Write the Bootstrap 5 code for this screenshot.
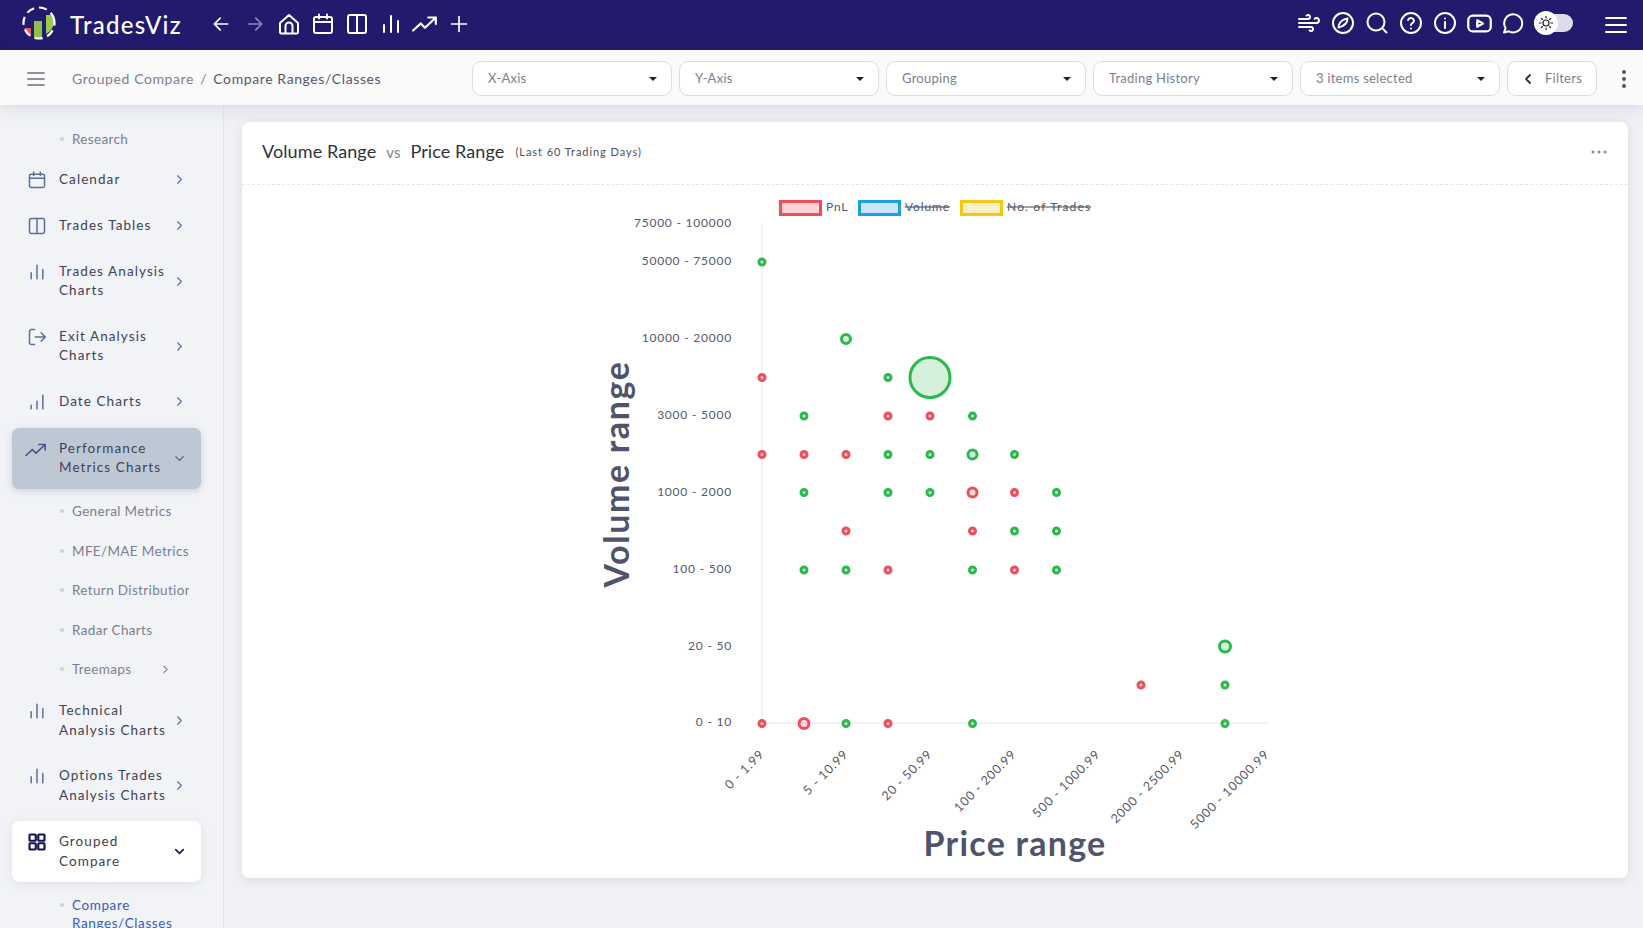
<!DOCTYPE html>
<html lang="en">
<head>
<meta charset="utf-8">
<title>TradesViz</title>
<link rel="stylesheet" href="https://cdn.jsdelivr.net/npm/bootstrap@5.3.0/dist/css/bootstrap.min.css">
<style>
html,body{height:100%}
body{font-family:"Lato","Noto Sans",sans-serif;background:#f0f1f5;color:#3f4254;overflow:hidden}
.ico{fill:none;stroke:currentColor;stroke-width:1.8;stroke-linecap:round;stroke-linejoin:round;flex:none;display:block}
.top-strip{height:50px;background:#211a6d;color:#fff;flex:none}
.brand-word{font-size:24px;font-weight:500;letter-spacing:1.25px;color:#fff;margin-left:14px;width:133.500px}
.nav-ic{color:#fff;stroke-width:2}
.nav-ic.dim{color:#8d8ab8}
.nav-slot{width:34px;display:flex;justify-content:center;align-items:center}
.theme-switch{width:39px;height:18px;border-radius:9px;background:rgba(255,255,255,.85);position:relative;margin-left:4px;margin-right:32px;margin-bottom:4px}
.theme-knob{position:absolute;left:0;top:-3px;width:24px;height:24px;border-radius:50%;background:#fff;color:#222;display:flex;align-items:center;justify-content:center}
.sub-strip{height:55px;padding-top:2px;background:#fafafb;flex:none;box-shadow:0 3px 16px rgba(60,65,90,.14);position:relative;z-index:2}
.crumb{font-size:14px;letter-spacing:.6px;color:#7c7f8e}
.crumb b{font-weight:400;color:#555868}
.crumb i{font-style:normal;margin:0 2px}
.pick{width:200px;height:35px;border:1px solid #dcdde2;border-radius:9px;background:#fff;color:#7c7f8e;font-size:13px;padding:0 14px 0 15px;display:flex;align-items:center;justify-content:space-between;letter-spacing:.25px}
.pick.dropdown-toggle::after{color:#222;margin:0;border-top-width:.36em;border-left-width:.33em;border-right-width:.33em}
.pick:hover,.pick:focus{background:#fff;color:#7c7f8e;border-color:#dcdde2}
.pick-short{width:90px;justify-content:center;gap:12px}
.side-col{width:224px;flex:none;border-right:1px solid #e5e7ec;background:#f1f3f6;padding-top:14px;overflow:hidden}
.side-item{width:189px;margin:0 0 4px 12px;padding:11px 14px 11px 15px;display:flex;color:#3f4254;font-size:13.5px;line-height:19.5px;letter-spacing:1.08px;text-decoration:none;border-radius:7px}
.side-item.one{height:42px}
.side-label{flex:1;margin-left:12px;white-space:nowrap}
.side-icon{color:#5b6f9e}
.side-chev{color:#5b6f9e;align-self:center}
.side-item.open-grey{background:#bec8d4;box-shadow:0 2px 6px rgba(90,100,130,.25);margin-top:5px;margin-bottom:3px}
.side-item.open-white{background:#fff;box-shadow:0 2px 8px rgba(90,100,130,.12);margin-top:5px}
.side-item.open-white .side-icon,.side-item.open-white .side-chev{color:#171352}
.side-item.tech-gap{margin-top:1px}
.side-sub{height:39.5px;margin-left:60px;width:129px;display:flex;align-items:center;font-size:13.5px;letter-spacing:.35px;color:#7c7f8e;white-space:nowrap;overflow:hidden;text-decoration:none;position:relative;padding-left:12px}
.side-sub::before{content:"";position:absolute;left:0;top:50%;width:4px;height:4px;margin-top:-2px;border-radius:50%;background:#cfd3da}
.side-sub.here{height:auto;margin-top:14px;align-items:flex-start;line-height:18px;color:#3d5bc0;letter-spacing:.6px}
.side-sub.here::before{top:9px}
.main-col{padding:17px 15px 0 18px;min-width:0}
.chart-card{height:756px;background:#fff;border-radius:7px;box-shadow:0 2px 10px rgba(60,65,90,.12)}
.chart-head{height:63px;border-bottom:1px dashed #e4e6ea;padding:0 20px 2px;color:#2f3140}
.chart-head h1{font-size:18px;font-weight:400;margin:0;letter-spacing:.1px}
.vs{color:#80838f;font-size:15px;margin:0 10px}
.days{font-size:11px;letter-spacing:.95px;color:#4c4f5d;margin-left:11px}
.chart-svg{display:block;width:1386px;height:693px}
.tick{font-size:12px;fill:#55586a;letter-spacing:.78px}
.tick-x{font-size:12.5px;letter-spacing:.8px}
.axis-name{font-size:34px;font-weight:700;fill:#50536a;letter-spacing:1.25px}
.axis-name.tall{letter-spacing:1.6px}
.legend-word{font-size:12px;fill:#55586a;letter-spacing:.85px}
.struck{text-decoration:line-through}
.dot-g{fill:rgba(45,184,77,.2);stroke:#2db84d;stroke-width:3}
.dot-r{fill:rgba(238,77,90,.2);stroke:#ee4d5a;stroke-width:3}
</style>
</head>
<body class="d-flex flex-column">

<svg width="0" height="0" class="position-absolute">
<symbol id="i-cal" viewBox="0 0 24 24"><rect x="3" y="5" width="18" height="16" rx="2"/><path d="M3 10h18M8 2.500v4M16 2.500v4"/></symbol>
<symbol id="i-col" viewBox="0 0 24 24"><rect x="3" y="3" width="18" height="18" rx="2"/><path d="M12 3v18"/></symbol>
<symbol id="i-bars" viewBox="0 0 24 24"><path d="M5 20v-7M12 20V4M19 20V9"/></symbol>
<symbol id="i-step" viewBox="0 0 24 24"><path d="M5 20v-4M12 20v-9M19 20V4"/></symbol>
<symbol id="i-trend" viewBox="0 0 24 24"><path d="M1 18l7-6.500 4 4L22 6M15 6h7v6"/></symbol>
<symbol id="i-right" viewBox="0 0 24 24"><path d="M9 6l6 6-6 6"/></symbol>
<symbol id="i-down" viewBox="0 0 24 24"><path d="M6 9l6 6 6-6"/></symbol>
</svg>

<header class="top-strip d-flex align-items-center">
  <svg width="34" height="34" viewBox="0 0 34 34" style="margin-left:22px;margin-bottom:4px;flex:none" aria-label="TradesViz logo">
    <path d="M2 22h7v9z" fill="#e0566a"/>
    <rect x="12" y="15" width="8" height="17" fill="#8fc04a"/>
    <path d="M24 9h7a15 15 0 0 1 1 8 15 15 0 0 1-8 11z" fill="#9cc84e"/>
    <circle cx="17" cy="17" r="15.500" fill="none" stroke="#fff" stroke-width="2.200" stroke-dasharray="8 5" transform="rotate(-20 17 17)"/>
  </svg>
  <span class="brand-word">TradesViz</span>
  <div class="d-flex align-items-center" style="padding-bottom:2px">
    <span class="nav-slot"><svg class="ico nav-ic" width="20" height="20" viewBox="0 0 24 24"><path d="M20 12H4M11 5l-7 7 7 7"/></svg></span>
    <span class="nav-slot"><svg class="ico nav-ic dim" width="20" height="20" viewBox="0 0 24 24"><path d="M4 12h16M13 5l7 7-7 7"/></svg></span>
    <span class="nav-slot"><svg class="ico nav-ic" width="24" height="24" viewBox="0 0 24 24"><path d="M3 11l9-8 9 8v9a1.500 1.500 0 0 1-1.500 1.500h-15A1.500 1.500 0 0 1 3 20zM8.500 21.500V14a3.500 3.500 0 0 1 7 0v7.500"/></svg></span>
    <span class="nav-slot"><svg class="ico nav-ic" width="24" height="24"><use href="#i-cal"/></svg></span>
    <span class="nav-slot"><svg class="ico nav-ic" width="24" height="24"><use href="#i-col"/></svg></span>
    <span class="nav-slot"><svg class="ico nav-ic" width="24" height="24"><use href="#i-bars"/></svg></span>
    <span class="nav-slot"><svg class="ico nav-ic" width="26" height="26"><use href="#i-trend"/></svg></span>
    <span class="nav-slot"><svg class="ico nav-ic" width="20" height="20" viewBox="0 0 24 24"><path d="M12 3v18M3 12h18"/></svg></span>
  </div>
  <div class="d-flex align-items-center ms-auto">
    <span class="nav-slot" style="margin-bottom:4px"><svg class="ico nav-ic" width="24" height="24" viewBox="0 0 24 24"><path d="M9.590 4.590A2 2 0 1 1 11 8H2m10.590 11.410A2 2 0 1 0 14 16H2m15.730-8.270A2.500 2.500 0 1 1 19.500 12H2"/></svg></span>
    <span class="nav-slot" style="margin-bottom:4px"><svg class="ico nav-ic" width="24" height="24" viewBox="0 0 24 24"><circle cx="12" cy="12" r="10"/><path d="M16.500 7.500c0 4-3 7.500-9 9 0-4.500 3.500-8 9-9z"/></svg></span>
    <span class="nav-slot" style="margin-bottom:4px"><svg class="ico nav-ic" width="24" height="24" viewBox="0 0 24 24"><circle cx="11" cy="11" r="8.500"/><path d="M21.500 21.500l-4.500-4.500"/></svg></span>
    <span class="nav-slot" style="margin-bottom:4px"><svg class="ico nav-ic" width="24" height="24" viewBox="0 0 24 24"><circle cx="12" cy="12" r="10"/><path d="M9.100 9a3 3 0 0 1 5.800 1c0 2-3 2.500-3 4M12 17.500v.01"/></svg></span>
    <span class="nav-slot" style="margin-bottom:4px"><svg class="ico nav-ic" width="24" height="24" viewBox="0 0 24 24"><circle cx="12" cy="12" r="10"/><path d="M12 11v6M12 7.500v.01"/></svg></span>
    <span class="nav-slot" style="margin-bottom:4px"><svg class="ico nav-ic" width="27" height="27" viewBox="0 0 24 24"><rect x="2" y="5" width="20" height="14" rx="4"/><path d="M10 9.200l5 2.800-5 2.800z"/></svg></span>
    <span class="nav-slot" style="margin-bottom:4px"><svg class="ico nav-ic" width="24" height="24" viewBox="0 0 24 24"><path d="M3 21.500l1.600-4.300a9 9 0 1 1 3.300 3.100z"/></svg></span>
    <div class="theme-switch"><span class="theme-knob"><svg class="ico" width="16" height="16" viewBox="0 0 24 24"><circle cx="12" cy="12" r="4.500"/><path d="M12 2v2.500M12 19.500V22M2 12h2.500M19.500 12H22M5 5l1.700 1.700M17.300 17.300L19 19M5 19l1.700-1.700M17.300 6.700L19 5"/></svg></span></div>
    <svg class="ico nav-ic" width="22" height="22" viewBox="0 0 22 22" style="margin-right:16px"><path d="M1 4h20M1 11h20M1 18h20"/></svg>
  </div>
</header>

<div class="sub-strip d-flex align-items-center">
  <svg class="ico" width="18" height="16" viewBox="0 0 18 16" style="margin-left:27px;color:#8d8f9c"><path d="M1 2h16M1 8h16M1 14h16"/></svg>
  <nav class="crumb" style="margin-left:27px">Grouped Compare <i>/</i> <b>Compare Ranges/Classes</b></nav>
  <div class="d-flex align-items-center ms-auto" style="gap:7px;margin-right:12px">
    <button class="btn pick dropdown-toggle" type="button">X-Axis</button>
    <button class="btn pick dropdown-toggle" type="button">Y-Axis</button>
    <button class="btn pick dropdown-toggle" type="button">Grouping</button>
    <button class="btn pick dropdown-toggle" type="button">Trading History</button>
    <button class="btn pick dropdown-toggle" type="button">3 items selected</button>
    <button class="btn pick pick-short" type="button"><svg class="ico" width="10" height="12" viewBox="0 0 10 12" style="color:#333"><path d="M7 2L3 6l4 4"/></svg>Filters</button>
    <svg width="6" height="20" viewBox="0 0 6 20" style="margin-left:17px;margin-right:4px;fill:#555"><circle cx="3" cy="3" r="2"/><circle cx="3" cy="10" r="2"/><circle cx="3" cy="17" r="2"/></svg>
  </div>
</div>

<div class="d-flex flex-grow-1" style="min-height:0">
  <aside class="side-col">
    <a class="side-sub" href="#">Research</a>
    <a class="side-item one" href="#"><svg class="ico side-icon" width="20" height="20"><use href="#i-cal"/></svg><span class="side-label">Calendar</span><svg class="ico side-chev" width="15" height="15"><use href="#i-right"/></svg></a>
    <a class="side-item one" href="#"><svg class="ico side-icon" width="20" height="20"><use href="#i-col"/></svg><span class="side-label">Trades Tables</span><svg class="ico side-chev" width="15" height="15"><use href="#i-right"/></svg></a>
    <a class="side-item" href="#"><svg class="ico side-icon" width="20" height="20"><use href="#i-bars"/></svg><span class="side-label">Trades Analysis<br>Charts</span><svg class="ico side-chev" width="15" height="15"><use href="#i-right"/></svg></a>
    <a class="side-item" href="#"><svg class="ico side-icon" width="20" height="20" viewBox="0 0 24 24"><path d="M9 21H5a2 2 0 0 1-2-2V5a2 2 0 0 1 2-2h4M10 12h12M17 7l5 5-5 5"/></svg><span class="side-label">Exit Analysis<br>Charts</span><svg class="ico side-chev" width="15" height="15"><use href="#i-right"/></svg></a>
    <a class="side-item one" href="#"><svg class="ico side-icon" width="20" height="20"><use href="#i-step"/></svg><span class="side-label">Date Charts</span><svg class="ico side-chev" width="15" height="15"><use href="#i-right"/></svg></a>
    <a class="side-item open-grey" href="#"><svg class="ico side-icon" width="22" height="22" style="margin-left:-2px;color:#47598c"><use href="#i-trend"/></svg><span class="side-label">Performance<br>Metrics Charts</span><svg class="ico side-chev" width="15" height="15" style="color:#47598c"><use href="#i-down"/></svg></a>
    <a class="side-sub" href="#">General Metrics</a>
    <a class="side-sub" href="#">MFE/MAE Metrics</a>
    <a class="side-sub" href="#">Return Distribution</a>
    <a class="side-sub" href="#">Radar Charts</a>
    <a class="side-sub" href="#">Treemaps<svg class="ico" width="13" height="13" style="margin-left:28px;color:#3f4254"><use href="#i-right"/></svg></a>
    <a class="side-item tech-gap" href="#"><svg class="ico side-icon" width="20" height="20"><use href="#i-bars"/></svg><span class="side-label">Technical<br>Analysis Charts</span><svg class="ico side-chev" width="15" height="15"><use href="#i-right"/></svg></a>
    <a class="side-item" href="#"><svg class="ico side-icon" width="20" height="20"><use href="#i-bars"/></svg><span class="side-label">Options Trades<br>Analysis Charts</span><svg class="ico side-chev" width="15" height="15"><use href="#i-right"/></svg></a>
    <a class="side-item open-white" href="#"><svg class="ico side-icon" width="20" height="20" viewBox="0 0 24 24" style="stroke-width:2.600"><rect x="3" y="3" width="7.500" height="7.500" rx="1"/><rect x="13.500" y="3" width="7.500" height="7.500" rx="1"/><rect x="3" y="13.500" width="7.500" height="7.500" rx="1"/><rect x="13.500" y="13.500" width="7.500" height="7.500" rx="1"/></svg><span class="side-label">Grouped<br>Compare</span><svg class="ico side-chev" width="15" height="15" style="stroke-width:2.600"><use href="#i-down"/></svg></a>
    <a class="side-sub here" href="#">Compare<br>Ranges/Classes</a>
  </aside>

  <main class="main-col flex-grow-1">
    <section class="chart-card">
      <div class="chart-head d-flex align-items-center">
        <h1>Volume Range</h1><span class="vs">vs</span><h1>Price Range</h1><span class="days">(Last 60 Trading Days)</span>
        <svg class="ms-auto" width="16" height="4" viewBox="0 0 16 4" style="fill:#8a8d99;margin-right:1px"><circle cx="2" cy="2" r="1.500"/><circle cx="8" cy="2" r="1.500"/><circle cx="14" cy="2" r="1.500"/></svg>
      </div>
      <svg class="chart-svg" viewBox="242 185 1386 693" role="img" aria-label="Bubble chart of volume range against price range">
        <rect x="780.500" y="201.500" width="40" height="13" fill="#fdd5d8" stroke="#ee4d5a" stroke-width="3"/>
        <text class="legend-word" x="826" y="211">PnL</text>
        <rect x="859.500" y="201.500" width="40" height="13" fill="#c9e6fa" stroke="#1c9fe0" stroke-width="3"/>
        <text class="legend-word struck" x="905" y="211">Volume</text>
        <rect x="961.500" y="201.500" width="40" height="13" fill="#fdf0c4" stroke="#f5c518" stroke-width="3"/>
        <text class="legend-word struck" x="1007" y="211" textLength="84">No. of Trades</text>
        <path d="M762 223V723H1268" fill="none" stroke="#e4e4e6" stroke-width="1"/>
        <g text-anchor="end">
          <text class="tick" x="732" y="227">75000 - 100000</text>
          <text class="tick" x="732" y="265">50000 - 75000</text>
          <text class="tick" x="732" y="342">10000 - 20000</text>
          <text class="tick" x="732" y="419">3000 - 5000</text>
          <text class="tick" x="732" y="496">1000 - 2000</text>
          <text class="tick" x="732" y="573">100 - 500</text>
          <text class="tick" x="732" y="650">20 - 50</text>
          <text class="tick" x="732" y="726">0 - 10</text>
        </g>
        <g text-anchor="end">
          <text class="tick tick-x" transform="translate(765 755) rotate(-45)">0 - 1.99</text>
          <text class="tick tick-x" transform="translate(849 755) rotate(-45)">5 - 10.99</text>
          <text class="tick tick-x" transform="translate(933 755) rotate(-45)">20 - 50.99</text>
          <text class="tick tick-x" transform="translate(1017 755) rotate(-45)">100 - 200.99</text>
          <text class="tick tick-x" transform="translate(1101 755) rotate(-45)">500 - 1000.99</text>
          <text class="tick tick-x" transform="translate(1185 755) rotate(-45)">2000 - 2500.99</text>
          <text class="tick tick-x" transform="translate(1270 755) rotate(-45)">5000 - 10000.99</text>
        </g>
        <text class="axis-name" x="1015" y="856" text-anchor="middle">Price range</text>
        <text class="axis-name tall" transform="translate(629 474) rotate(-90)" text-anchor="middle">Volume range</text>
        <circle class="dot-g" cx="762" cy="262" r="3"/>
        <circle class="dot-g" cx="846" cy="339" r="4.500"/>
        <circle class="dot-r" cx="762" cy="377.500" r="3"/>
        <circle class="dot-g" cx="888" cy="377.500" r="3"/>
        <circle class="dot-g" cx="930" cy="377.500" r="20"/>
        <circle class="dot-g" cx="804" cy="416" r="3"/>
        <circle class="dot-r" cx="888" cy="416" r="3"/>
        <circle class="dot-r" cx="930" cy="416" r="3"/>
        <circle class="dot-g" cx="972.500" cy="416" r="3"/>
        <circle class="dot-r" cx="762" cy="454.500" r="3"/>
        <circle class="dot-r" cx="804" cy="454.500" r="3"/>
        <circle class="dot-r" cx="846" cy="454.500" r="3"/>
        <circle class="dot-g" cx="888" cy="454.500" r="3"/>
        <circle class="dot-g" cx="930" cy="454.500" r="3"/>
        <circle class="dot-g" cx="972.500" cy="454.500" r="4.500"/>
        <circle class="dot-g" cx="1014.500" cy="454.500" r="3"/>
        <circle class="dot-g" cx="804" cy="492.500" r="3"/>
        <circle class="dot-g" cx="888" cy="492.500" r="3"/>
        <circle class="dot-g" cx="930" cy="492.500" r="3"/>
        <circle class="dot-r" cx="972.500" cy="492.500" r="4.500"/>
        <circle class="dot-r" cx="1014.500" cy="492.500" r="3"/>
        <circle class="dot-g" cx="1056.500" cy="492.500" r="3"/>
        <circle class="dot-r" cx="846" cy="531" r="3"/>
        <circle class="dot-r" cx="972.500" cy="531" r="3"/>
        <circle class="dot-g" cx="1014.500" cy="531" r="3"/>
        <circle class="dot-g" cx="1056.500" cy="531" r="3"/>
        <circle class="dot-g" cx="804" cy="570" r="3"/>
        <circle class="dot-g" cx="846" cy="570" r="3"/>
        <circle class="dot-r" cx="888" cy="570" r="3"/>
        <circle class="dot-g" cx="972.500" cy="570" r="3"/>
        <circle class="dot-r" cx="1014.500" cy="570" r="3"/>
        <circle class="dot-g" cx="1056.500" cy="570" r="3"/>
        <circle class="dot-g" cx="1225" cy="646.500" r="5.500"/>
        <circle class="dot-r" cx="1141" cy="685" r="3"/>
        <circle class="dot-g" cx="1225" cy="685" r="3"/>
        <circle class="dot-r" cx="762" cy="723.500" r="3"/>
        <circle class="dot-r" cx="804" cy="723.500" r="5"/>
        <circle class="dot-g" cx="846" cy="723.500" r="3"/>
        <circle class="dot-r" cx="888" cy="723.500" r="3"/>
        <circle class="dot-g" cx="972.500" cy="723.500" r="3"/>
        <circle class="dot-g" cx="1225" cy="723.500" r="3"/>
      </svg>
    </section>
  </main>
</div>

<script src="https://cdn.jsdelivr.net/npm/bootstrap@5.3.0/dist/js/bootstrap.bundle.min.js"></script>
</body>
</html>
